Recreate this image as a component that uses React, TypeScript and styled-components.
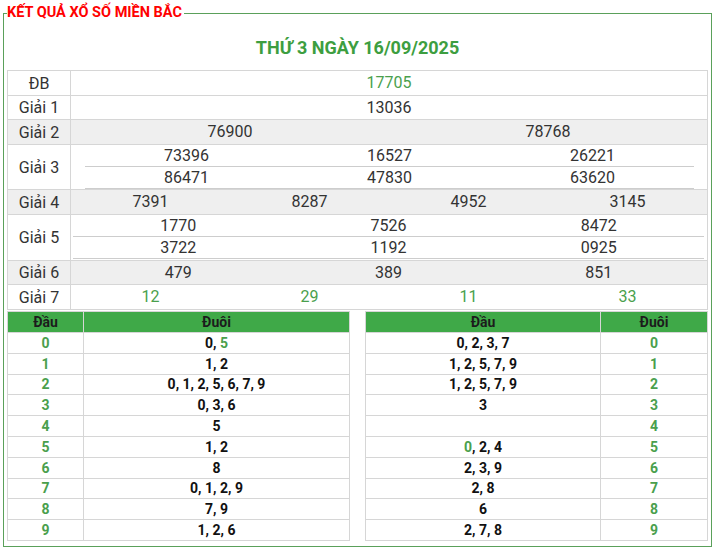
import React from "react";
import styled, { createGlobalStyle } from "styled-components";

const GlobalStyle = createGlobalStyle`
  html, body { margin: 0; padding: 0; background: #fff; }
  body { font-family: Roboto, "Noto Sans", Arial, sans-serif; color: #333; }
  * { box-sizing: border-box; }
`;

const LINE = "#d6d6d6";
const GREEN_TEXT = "#4a9f4d";

const Page = styled.div`
  padding: 5px 3px 0;
`;

const Frame = styled.fieldset`
  margin: 0;
  padding: 0 3px 5px;
  border: 1px solid #5aa05a;
  min-width: 0;
`;

const Legend = styled.legend`
  padding: 0 2px 0 0;
  font-size: 14.5px;
  line-height: 16px;
  font-weight: 700;
  color: #f00;
`;

const Title = styled.h2`
  margin: 0;
  padding: 16px 0 11px;
  text-align: center;
  font-size: 18px;
  line-height: 22px;
  font-weight: 700;
  color: #3d9e40;
`;

const Results = styled.div`
  border: 1px solid ${LINE};
  border-bottom: none;
`;

const Row = styled.div<{ $h: number; $shade?: boolean }>`
  display: grid;
  grid-template-columns: 63px 1fr;
  height: ${(p) => p.$h}px;
  border-bottom: 1px solid ${LINE};
  background: ${(p) => (p.$shade ? "#efefef" : "#fff")};
`;

const Label = styled.div`
  border-right: 1px solid ${LINE};
  display: flex;
  align-items: center;
  justify-content: center;
  font-size: 16px;
  color: #333;
`;

const Values = styled.div<{ $cols: number; $inset?: string }>`
  display: grid;
  grid-template-columns: repeat(${(p) => p.$cols}, 1fr);
  padding: ${(p) => p.$inset || "0"};
  align-items: center;
  height: 100%;
`;

const Stack = styled.div<{ $inset: string }>`
  padding: ${(p) => p.$inset};
  display: flex;
  flex-direction: column;
`;

const SubRow = styled.div`
  display: grid;
  grid-template-columns: repeat(3, 1fr);
  align-items: center;
  height: 22px;
  border-bottom: 1px solid #cdcdcd;
`;

const Num = styled.span<{ $green?: boolean }>`
  text-align: center;
  font-size: 16px;
  line-height: 20px;
  color: ${(p) => (p.$green ? GREEN_TEXT : "#333")};
`;

const LotoArea = styled.div`
  display: grid;
  grid-template-columns: 1fr 1fr;
  column-gap: 15px;
  margin-top: 1px;
`;

const Loto = styled.div`
  border: 1px solid ${LINE};
  border-bottom: none;
`;

const LRow = styled.div<{ $cols: string; $head?: boolean }>`
  display: grid;
  grid-template-columns: ${(p) => p.$cols};
  height: ${(p) => (p.$head ? 21 : 20.8)}px;
  border-bottom: 1px solid ${LINE};
  background: ${(p) => (p.$head ? "#3fa948" : "#fff")};
`;

const LCell = styled.div<{ $green?: boolean; $head?: boolean }>`
  display: flex;
  align-items: center;
  justify-content: center;
  font-weight: 700;
  font-size: 14px;
  color: ${(p) => (p.$head ? "#1c1c1c" : p.$green ? GREEN_TEXT : "#111")};
  white-space: pre;
  & + & {
    border-left: 1px solid ${LINE};
  }
`;

const G = styled.span`
  color: ${GREEN_TEXT};
`;

const dau: React.ReactNode[] = [
  <span>0, <G>5</G></span>,
  "1, 2",
  "0, 1, 2, 5, 6, 7, 9",
  "0, 3, 6",
  "5",
  "1, 2",
  "8",
  "0, 1, 2, 9",
  "7, 9",
  "1, 2, 6",
];

const duoi: React.ReactNode[] = [
  "0, 2, 3, 7",
  "1, 2, 5, 7, 9",
  "1, 2, 5, 7, 9",
  "3",
  "",
  <span><G>0</G>, 2, 4</span>,
  "2, 3, 9",
  "2, 8",
  "6",
  "2, 7, 8",
];

export default function App() {
  return (
    <>
      <GlobalStyle />
      <Page>
        <Frame>
          <Legend>KẾT QUẢ XỔ SỐ MIỀN BẮC</Legend>
          <Title>THỨ 3 NGÀY 16/09/2025</Title>
          <Results>
            <Row $h={25}>
              <Label>ĐB</Label>
              <Values $cols={1}><Num $green>17705</Num></Values>
            </Row>
            <Row $h={24}>
              <Label>Giải 1</Label>
              <Values $cols={1}><Num>13036</Num></Values>
            </Row>
            <Row $h={25} $shade>
              <Label>Giải 2</Label>
              <Values $cols={2}><Num>76900</Num><Num>78768</Num></Values>
            </Row>
            <Row $h={45}>
              <Label>Giải 3</Label>
              <Stack $inset="0 13px 0 14px">
                <SubRow><Num>73396</Num><Num>16527</Num><Num>26221</Num></SubRow>
                <SubRow><Num>86471</Num><Num>47830</Num><Num>63620</Num></SubRow>
              </Stack>
            </Row>
            <Row $h={25} $shade>
              <Label>Giải 4</Label>
              <Values $cols={4}><Num>7391</Num><Num>8287</Num><Num>4952</Num><Num>3145</Num></Values>
            </Row>
            <Row $h={46}>
              <Label>Giải 5</Label>
              <Stack $inset="0 3px 0 2px">
                <SubRow><Num>1770</Num><Num>7526</Num><Num>8472</Num></SubRow>
                <SubRow><Num>3722</Num><Num>1192</Num><Num>0925</Num></SubRow>
              </Stack>
            </Row>
            <Row $h={24} $shade>
              <Label>Giải 6</Label>
              <Values $cols={3} $inset="0 3px 0 2px"><Num>479</Num><Num>389</Num><Num>851</Num></Values>
            </Row>
            <Row $h={25}>
              <Label>Giải 7</Label>
              <Values $cols={4}>
                <Num $green>12</Num><Num $green>29</Num><Num $green>11</Num><Num $green>33</Num>
              </Values>
            </Row>
          </Results>
          <LotoArea>
            <Loto>
              <LRow $cols="75px 1fr" $head>
                <LCell $head>Đầu</LCell>
                <LCell $head>Đuôi</LCell>
              </LRow>
              {dau.map((v, i) => (
                <LRow $cols="75px 1fr" key={i}>
                  <LCell $green>{i}</LCell>
                  <LCell>{v}</LCell>
                </LRow>
              ))}
            </Loto>
            <Loto>
              <LRow $cols="234px 1fr" $head>
                <LCell $head>Đầu</LCell>
                <LCell $head>Đuôi</LCell>
              </LRow>
              {duoi.map((v, i) => (
                <LRow $cols="234px 1fr" key={i}>
                  <LCell>{v}</LCell>
                  <LCell $green>{i}</LCell>
                </LRow>
              ))}
            </Loto>
          </LotoArea>
        </Frame>
      </Page>
    </>
  );
}
